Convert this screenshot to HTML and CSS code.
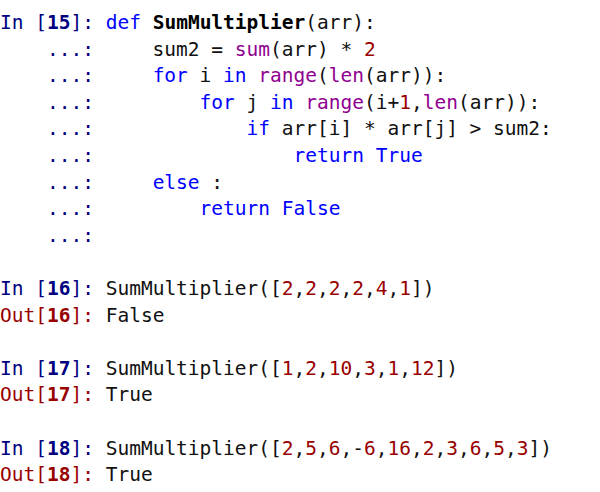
FILE: index.html
```html
<!DOCTYPE html>
<html>
<head>
<meta charset="utf-8">
<link rel="stylesheet" href="styles.css">
</head>
<body>
<pre class="console"><span class="in">In [<b>15</b>]:</span> <span class="kw">def</span> <span class="fn">SumMultiplier</span>(arr):
<span class="in">    ...:</span>     sum2 = <span class="bi">sum</span>(arr) * <span class="num">2</span>
<span class="in">    ...:</span>     <span class="kw">for</span> i <span class="kw">in</span> <span class="bi">range</span>(<span class="bi">len</span>(arr)):
<span class="in">    ...:</span>         <span class="kw">for</span> j <span class="kw">in</span> <span class="bi">range</span>(i+<span class="num">1</span>,<span class="bi">len</span>(arr)):
<span class="in">    ...:</span>             <span class="kw">if</span> arr[i] * arr[j] &gt; sum2:
<span class="in">    ...:</span>                 <span class="kw">return</span> <span class="kw">True</span>
<span class="in">    ...:</span>     <span class="kw">else</span> :
<span class="in">    ...:</span>         <span class="kw">return</span> <span class="kw">False</span>
<span class="in">    ...:</span>

<span class="in">In [<b>16</b>]:</span> SumMultiplier([<span class="num">2</span>,<span class="num">2</span>,<span class="num">2</span>,<span class="num">2</span>,<span class="num">4</span>,<span class="num">1</span>])
<span class="out">Out[<b>16</b>]:</span> False

<span class="in">In [<b>17</b>]:</span> SumMultiplier([<span class="num">1</span>,<span class="num">2</span>,<span class="num">10</span>,<span class="num">3</span>,<span class="num">1</span>,<span class="num">12</span>])
<span class="out">Out[<b>17</b>]:</span> True

<span class="in">In [<b>18</b>]:</span> SumMultiplier([<span class="num">2</span>,<span class="num">5</span>,<span class="num">6</span>,-<span class="num">6</span>,<span class="num">16</span>,<span class="num">2</span>,<span class="num">3</span>,<span class="num">6</span>,<span class="num">5</span>,<span class="num">3</span>])
<span class="out">Out[<b>18</b>]:</span> True</pre>
</body>
</html>
```
FILE: styles.css
```css
html, body {
  margin: 0;
  padding: 0;
  background: #ffffff;
}
.console {
  margin: 0;
  padding: 10px 0 0 0;
  font-family: "DejaVu Sans Mono", "Liberation Mono", monospace;
  font-size: 19.5px;
  line-height: 26.6px;
  color: #111111;
}
.console b { font-weight: bold; }
.in { color: #000080; }
.out { color: #990000; }
.kw { color: #0000ff; }
.bi { color: #900090; }
.num { color: #990000; }
.fn { font-weight: bold; color: #000000; }
```
